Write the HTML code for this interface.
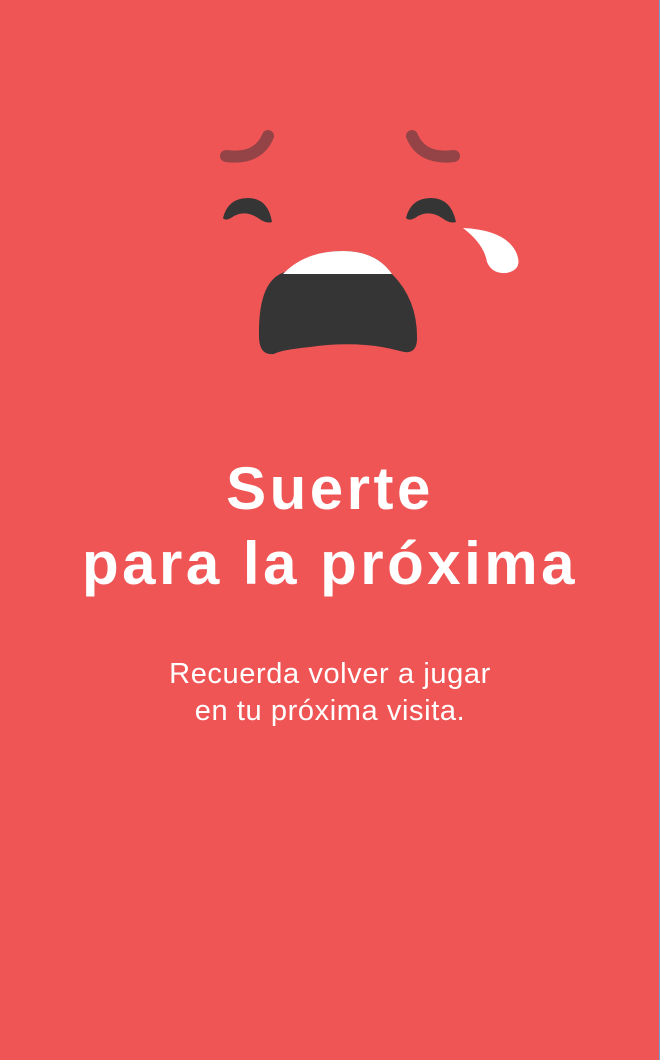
<!DOCTYPE html>
<html><head><meta charset="utf-8"><style>
html,body{margin:0;padding:0}
body{width:660px;height:1060px;background:#f05556;position:relative;overflow:hidden;font-family:"Liberation Sans",sans-serif;color:#fff}
.t{position:absolute;left:0;width:660px;text-align:center;font-weight:bold;font-size:60px;letter-spacing:3.5px;line-height:1}
.s{position:absolute;left:0;width:660px;text-align:center;font-size:29px;letter-spacing:0.6px;line-height:1}
</style></head><body>
<div style="position:absolute;right:0;top:0;width:1px;height:1060px;background:#6a9fd0"></div>
<svg width="660" height="400" style="position:absolute;left:0;top:0">
<path d="M268 136 Q258 160 226 156" stroke="#944446" stroke-width="12" fill="none" stroke-linecap="round"/>
<path d="M412 136 Q422 160 454 156" stroke="#944446" stroke-width="12" fill="none" stroke-linecap="round"/>
<path d="M223 218 Q228 198 248 198 Q268 198 272 222 Q266 224 258 218 Q246 210 234 216 Q226 222 223 218Z" fill="#353535"/>
<path d="M406 218 Q411 198 431 198 Q451 198 456 222 Q450 224 442 218 Q430 210 418 216 Q410 222 406 218Z" fill="#353535"/>
<path d="M463 228 Q505 230 516 252 Q524 270 506 273 Q492 274 487 262 Q484 244 463 228Z" fill="#fff"/>
<path d="M259 336 Q258 280 285 272 Q310 251 343 251 Q376 251 392 274 Q418 300 417 340 Q416 356 400 351 Q360 340 310 347 Q280 350 274 354 Q259 356 259 336Z" fill="#353535"/>
<path d="M283 274 Q305 251 343 251 Q376 251 392 274Z" fill="#fff"/>
</svg>
<div class="t" style="top:459px">Suerte</div>
<div class="t" style="top:534px">para la próxima</div>
<div class="s" style="top:660px">Recuerda volver a jugar</div>
<div class="s" style="top:697px">en tu próxima visita.</div>
</body></html>
